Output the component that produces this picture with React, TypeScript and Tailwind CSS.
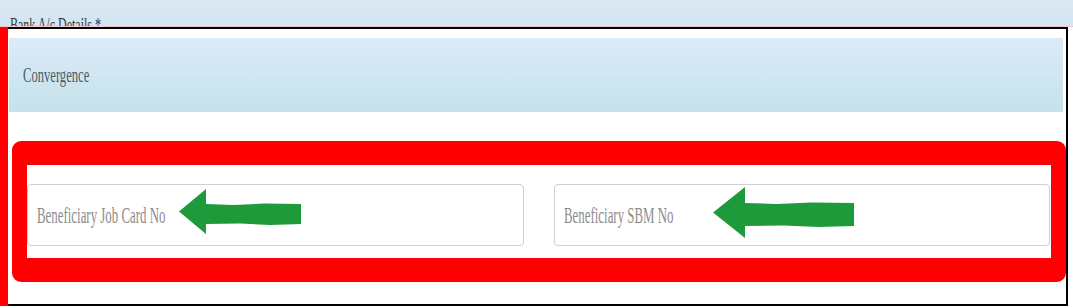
import React from "react";

const serif = { fontFamily: '"Liberation Serif", "Times New Roman", serif' };

function Arrow({ w, h, head, shaftTop, shaftBottom }: { w: number; h: number; head: number; shaftTop: number; shaftBottom: number }) {
  const mid = h / 2;
  return (
    <svg width={w} height={h} viewBox={`0 0 ${w} ${h}`}>
      <polygon
        fill="#1f9a3a"
        points={`0,${mid} ${head},0 ${head},${shaftTop} ${w * 0.45},${shaftTop + 1} ${w * 0.7},${shaftTop - 0.5} ${w},${shaftTop} ${w},${shaftBottom} ${w * 0.75},${shaftBottom + 1} ${w * 0.5},${shaftBottom - 0.5} ${head},${shaftBottom} ${head},${h}`}
      />
    </svg>
  );
}

function Field({ label, arrow }: { label: string; arrow: React.ReactNode }) {
  return (
    <div className="relative flex-1 h-[62px] border border-[#cfcfcf] rounded-[4px] bg-white flex items-center pl-[9px]">
      <span className="inline-block origin-left scale-x-[0.56] whitespace-nowrap text-[23px] leading-none text-[#8c8c8c]" style={serif}>
        {label}
      </span>
      {arrow}
    </div>
  );
}

export default function App() {
  return (
    <div className="w-[1073px] h-[308px] bg-white flex flex-col overflow-hidden">
      <div className="h-[27px] bg-gradient-to-b from-[#dbe9f5] to-[#d2e5f1] border-b border-[#f0c8cc] pl-[10px] pt-[14px] overflow-hidden">
        <span className="inline-block origin-left scale-x-[0.6] whitespace-nowrap text-[20px] leading-none text-[#3a3a3a]" style={serif}>
          Bank A/c Details *
        </span>
      </div>
      <div className="flex h-[279px]">
        <div className="w-[8px] bg-[#ff0000]" />
        <div className="w-[1060px] border-t-[2px] border-r-[2px] border-b-[2px] border-black bg-white flex flex-col pt-[9px]">
          <div className="ml-[1px] mr-[3px] h-[74px] bg-gradient-to-b from-[#dcebf8] to-[#c4e2ea] flex items-center pl-[14px]">
            <span className="inline-block origin-left scale-x-[0.6] whitespace-nowrap text-[21px] leading-none text-[#4d5a66]" style={serif}>
              Convergence
            </span>
          </div>
          <div className="mt-[29px] ml-[4px] mr-0 h-[141px] border-x-[15px] border-y-[24px] border-[#ff0000] rounded-[9px] bg-white flex gap-[30px] pt-[19px] pr-[1px]">
            <Field
              label="Beneficiary Job Card No"
              arrow={
                <div className="absolute left-[151px] top-[4px]">
                  <Arrow w={122} h={45} head={27} shaftTop={15} shaftBottom={35} />
                </div>
              }
            />
            <Field
              label="Beneficiary SBM No"
              arrow={
                <div className="absolute left-[158px] top-[2px]">
                  <Arrow w={141} h={51} head={32} shaftTop={16} shaftBottom={39} />
                </div>
              }
            />
          </div>
        </div>
      </div>
    </div>
  );
}
